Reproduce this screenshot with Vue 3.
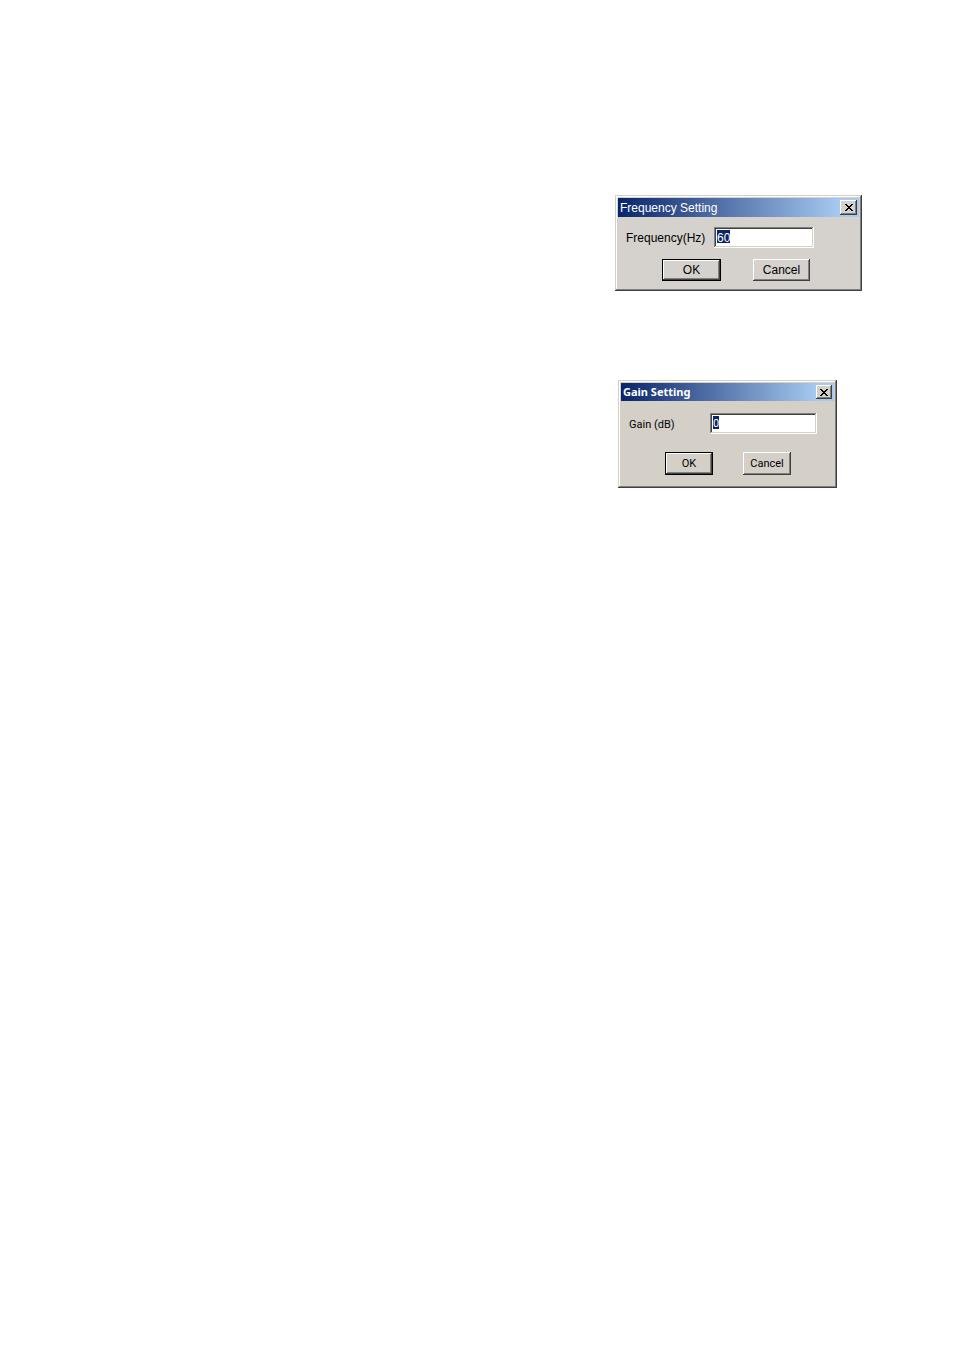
<script setup>
import { ref } from 'vue';

const frequency = ref('60');
const gain = ref('0');
</script>

<template>
  <main class="desktop">
    <form class="dialog frequency" aria-labelledby="frequency-title" @submit.prevent>
      <header class="title-bar">
        <h2 id="frequency-title">Frequency Setting</h2>
        <button type="button" class="close" aria-label="Close">
          <svg viewBox="0 0 8 7" width="8" height="7" shape-rendering="crispEdges">
            <path d="M0 0h2v1h1v1h2V1h1V0h2v1H7v1H6v1H5v1h1v1h1v1h1v1H6V6H5V5H3v1H2v1H0V6h1V5h1V4h1V3H2V2H1V1H0z" />
          </svg>
        </button>
      </header>
      <div class="field-row">
        <label for="frequency">Frequency(Hz)</label>
        <input id="frequency" v-model="frequency" type="text" />
      </div>
      <div class="button-row">
        <button type="submit" class="push default">OK</button>
        <button type="button" class="push">Cancel</button>
      </div>
    </form>

    <form class="dialog gain" aria-labelledby="gain-title" @submit.prevent>
      <header class="title-bar">
        <h2 id="gain-title">Gain Setting</h2>
        <button type="button" class="close" aria-label="Close">
          <svg viewBox="0 0 8 7" width="8" height="7" shape-rendering="crispEdges">
            <path d="M0 0h2v1h1v1h2V1h1V0h2v1H7v1H6v1H5v1h1v1h1v1h1v1H6V6H5V5H3v1H2v1H0V6h1V5h1V4h1V3H2V2H1V1H0z" />
          </svg>
        </button>
      </header>
      <div class="field-row">
        <label for="gain">Gain (dB)</label>
        <input id="gain" v-model="gain" type="text" />
      </div>
      <div class="button-row">
        <button type="submit" class="push default">OK</button>
        <button type="button" class="push">Cancel</button>
      </div>
    </form>
  </main>
</template>

<style>
body {
    margin: 0;
    background: #fff;
}
</style>

<style scoped>
.desktop {
    display: flex;
    flex-direction: column;
    align-items: flex-end;
    gap: 89px;
    padding: 195px 92px 40px 16px;
}
.dialog {
    box-sizing: border-box;
    padding: 3px;
    background: #d4d0c8;
    box-shadow:
        inset -1px -1px #404040,
        inset 1px 1px #d4d0c8,
        inset -2px -2px #808080,
        inset 2px 2px #fff;
    color: #000;
}
.frequency {
    width: 247px;
    padding-bottom: 10px;
    background: #d5d2cd;
    font: 12px/14px "Liberation Sans", sans-serif;
}
.gain {
    width: 219px;
    margin-right: 25px;
    padding-bottom: 13px;
    font: 11px/14px "Roboto", sans-serif;
}
.title-bar {
    display: flex;
    align-items: center;
    justify-content: space-between;
    height: 19px;
    padding: 0 2px;
    background: linear-gradient(to right, #0a246a, #a6caf0 92%);
}
.gain .title-bar {
    height: 18px;
}
h2 {
    margin: 0;
    color: #fff;
    font: inherit;
}
.gain h2 {
    font: bold 11px/14px "Noto Sans", sans-serif;
}
button,
input {
    box-sizing: border-box;
    border: 0;
    border-radius: 0;
    color: inherit;
    font: inherit;
}
.close,
.push {
    display: flex;
    align-items: center;
    justify-content: center;
    padding: 0;
    background: #d4d0c8;
    box-shadow:
        inset -1px -1px #404040,
        inset 1px 1px #fff,
        inset -2px -2px #808080;
}
.close {
    width: 16px;
    height: 14px;
}
.frequency .close {
    width: 17px;
    height: 15px;
}
.frequency .close,
.frequency .push {
    background: #d5d2cd;
}
.field-row {
    display: flex;
    align-items: center;
    padding: 10px 45px 0 8px;
}
.gain .field-row {
    padding: 12px 17px 0 8px;
}
label {
    flex: 1;
}
.gain label {
    padding-top: 2px;
}
input {
    width: 100px;
    height: 21px;
    padding: 3px;
    background-color: #fff;
    background-image: linear-gradient(#0a246a, #0a246a);
    background-repeat: no-repeat;
    background-origin: content-box;
    background-size: 13px 13px;
    box-shadow:
        inset -1px -1px #fff,
        inset 1px 1px #808080,
        inset -2px -2px #d4d0c8,
        inset 2px 2px #404040;
    color: #fff;
}
.gain input {
    width: 107px;
    background-size: 6px 13px;
}
.button-row {
    display: flex;
    justify-content: space-between;
    padding: 11px 49px 0 44px;
}
.gain .button-row {
    padding: 18px 43px 0 44px;
}
.push {
    width: 57px;
    height: 22px;
}
.frequency .default {
    width: 59px;
}
.gain .push {
    width: 48px;
    height: 23px;
}
.push.default {
    box-shadow:
        inset 0 0 0 1px #000,
        inset -2px -2px #404040,
        inset 2px 2px #fff,
        inset -3px -3px #808080;
}
</style>
